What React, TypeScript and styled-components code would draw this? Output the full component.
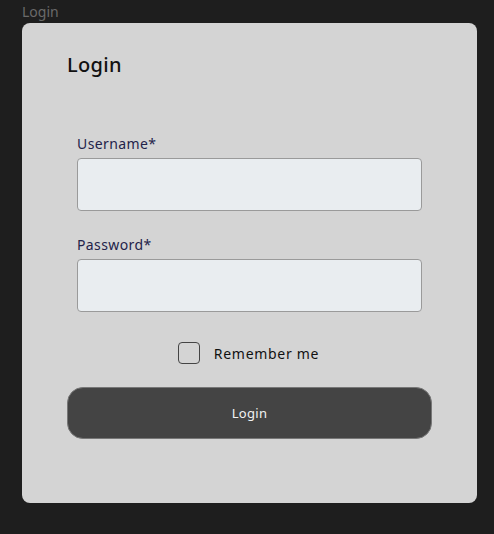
import React from "react";
import styled, { createGlobalStyle } from "styled-components";

const Global = createGlobalStyle`
  html, body { margin: 0; padding: 0; background: #1e1e1e; }
  body { font-family: "Noto Sans", "Open Sans", sans-serif; }
  * { box-sizing: border-box; }
`;

const Page = styled.div`
  width: 494px;
  height: 534px;
  padding: 0 17px 0 22px;
  display: flex;
  flex-direction: column;
`;

const Caption = styled.div`
  font-family: "Noto Sans", sans-serif;
  font-size: 14px;
  line-height: 23px;
  color: #6a6a6a;
`;

const Card = styled.form`
  background: #d4d4d4;
  border-radius: 8px;
  padding: 26px 45px 64px 45px;
  display: flex;
  flex-direction: column;
`;

const Title = styled.h1`
  margin: 0;
  font-family: "Noto Sans", sans-serif;
  font-size: 20px;
  font-weight: 500;
  letter-spacing: 0.3px;
  line-height: 32px;
  color: #111;
`;

const Fields = styled.div`
  margin-top: 52px;
  padding: 0 10px;
  display: flex;
  flex-direction: column;
  gap: 23px;
`;

const Field = styled.label`
  display: flex;
  flex-direction: column;
  gap: 4px;
`;

const LabelText = styled.span`
  font-size: 14px;
  line-height: 21px;
  letter-spacing: 0.4px;
  color: #23234a;
`;

const Input = styled.input`
  height: 53px;
  width: 100%;
  border: 1px solid #9a9a9a;
  border-radius: 4px;
  background: #e9edf0;
  padding: 0 12px;
  font: inherit;
  outline: none;
`;

const RememberRow = styled.label`
  margin-top: 30px;
  display: flex;
  align-items: center;
  justify-content: center;
  gap: 14px;
  font-size: 14px;
  letter-spacing: 0.7px;
  color: #111;
  padding-right: 2px;
`;

const Check = styled.span`
  width: 22px;
  height: 22px;
  border: 1px solid #444;
  border-radius: 4px;
  background: transparent;
`;

const Button = styled.button`
  margin-top: 23px;
  height: 52px;
  width: 100%;
  background: #444444;
  border: 1px solid #777;
  border-radius: 16px;
  color: #f2f2f2;
  font-family: "Noto Sans", sans-serif;
  font-size: 13px;
  letter-spacing: 0.3px;
  cursor: pointer;
`;

export default function App() {
  return (
    <>
      <Global />
      <Page>
        <Caption>Login</Caption>
        <Card onSubmit={(e) => e.preventDefault()}>
          <Title>Login</Title>
          <Fields>
            <Field>
              <LabelText>Username*</LabelText>
              <Input type="text" />
            </Field>
            <Field>
              <LabelText>Password*</LabelText>
              <Input type="password" />
            </Field>
          </Fields>
          <RememberRow>
            <Check />
            <span>Remember me</span>
          </RememberRow>
          <Button type="submit">Login</Button>
        </Card>
      </Page>
    </>
  );
}
